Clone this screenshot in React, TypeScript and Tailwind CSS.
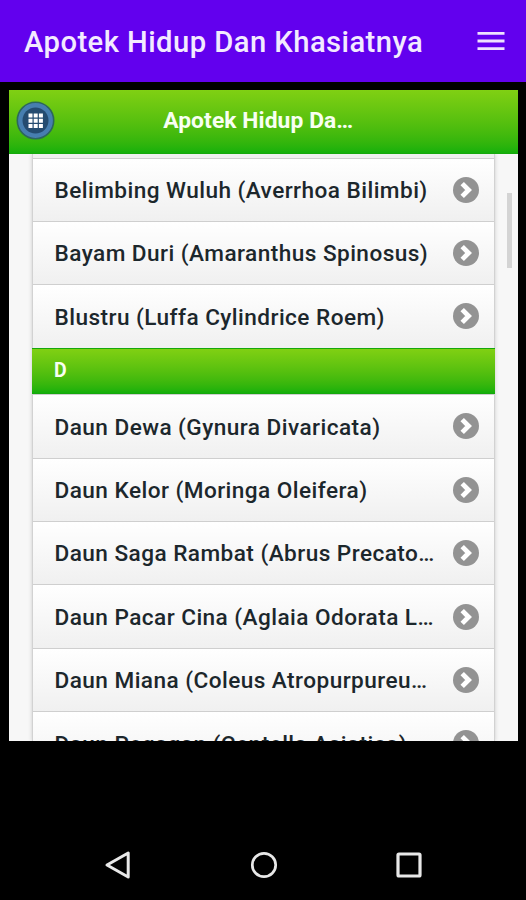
const beforeDivider = [
  "Belimbing Wuluh (Averrhoa Bilimbi)",
  "Bayam Duri (Amaranthus Spinosus)",
  "Blustru (Luffa Cylindrice Roem)"
];

const afterDivider = [
  "Daun Dewa (Gynura Divaricata)",
  "Daun Kelor (Moringa Oleifera)",
  "Daun Saga Rambat (Abrus Precato…",
  "Daun Pacar Cina (Aglaia Odorata L…",
  "Daun Miana (Coleus Atropurpureu…",
  "Daun Pegagan (Centella Asiatica)"
];

function ArrowIcon() {
  return (
    <svg className="shrink-0" width="26" height="26" viewBox="0 0 26 26" aria-hidden="true">
      <circle cx="13" cy="13" r="13" fill="#939393" />
      <path d="M9.2 6.6 15.6 13 9.2 19.4" fill="none" stroke="#fff" strokeWidth="4.8" />
    </svg>
  );
}

function PlantRow({ name }: { name: string }) {
  return (
    <li className="flex h-[63.4px] shrink-0 items-center justify-between border-t border-[#cfcfcf] bg-linear-to-b from-white to-[#f0f0f0] pr-[15px] pl-[21.5px]">
      <span className="pt-[3px] text-[22.6px] leading-none font-medium tracking-[0.45px] whitespace-nowrap text-[#1c272c]">{name}</span>
      <ArrowIcon />
    </li>
  );
}

export default function App() {
  return (
    <div className="flex h-[900px] w-[526px] flex-col overflow-hidden bg-black font-[Roboto,sans-serif]">
      <header className="flex h-[82px] shrink-0 items-center justify-between bg-[#6200ee] pr-[21px] pl-[24px]">
        <h1 className="pt-[4px] text-[29.2px] leading-none font-medium tracking-[0.45px] whitespace-nowrap text-[#f3eaff]">
          Apotek Hidup Dan Khasiatnya
        </h1>
        <svg width="28" height="20" viewBox="0 0 28 20" aria-hidden="true">
          <path d="M0.5 2.3h27M0.5 10h27M0.5 17.7h27" stroke="#eee2ff" strokeWidth="2.8" />
        </svg>
      </header>

      <main className="mt-[8px] ml-[9px] flex h-[650.5px] w-[508.5px] shrink-0 flex-col overflow-hidden bg-[#f7f7f7]">
        <div className="grid h-[64px] shrink-0 grid-cols-[53px_1fr_63px] items-center border-b border-[#16a80c] bg-linear-to-b from-[#80d013] to-[#13b00b]">
          <svg className="mb-[3px] ml-[7px]" width="39" height="39" viewBox="0 0 39 39" aria-hidden="true">
            <circle cx="19.5" cy="19.5" r="18.2" fill="#477eb0" stroke="#2d675c" strokeWidth="1.6" />
            <circle cx="19.5" cy="19.5" r="13" fill="#244b70" />
            <path
              d="M12.5 12.5h4v4h-4zM17.7 12.5h4v4h-4zM22.9 12.5h4v4h-4zM12.5 17.7h4v4h-4zM17.7 17.7h4v4h-4zM22.9 17.7h4v4h-4zM12.5 22.9h4v4h-4zM17.7 22.9h4v4h-4zM22.9 22.9h4v4h-4z"
              fill="#fff"
            />
          </svg>
          <h2 className="mb-[1px] text-center text-[22.8px] leading-none font-bold tracking-[0.1px] whitespace-nowrap text-[#f8fff2]">
            Apotek Hidup Da…
          </h2>
        </div>

        <div className="flex min-h-0 grow overflow-hidden">
          <div className="w-[23px] shrink-0" />
          <ul className="flex w-[463px] shrink-0 flex-col border-x border-[#d2d2d2] shadow-[0_0_4px_#cccccc]">
            <li className="h-[3.5px] shrink-0 bg-[#f0f0f0]" />
            {beforeDivider.map((name) => (
              <PlantRow key={name} name={name} />
            ))}
            <li className="-mx-px flex h-[46.5px] shrink-0 items-center border-y border-[#16a80c] bg-linear-to-b from-[#80d013] to-[#13b00b] pl-[22px] text-[19.5px] leading-none font-bold text-[#f8fff2]">
              D
            </li>
            {afterDivider.map((name) => (
              <PlantRow key={name} name={name} />
            ))}
          </ul>
          <div className="mt-[39px] ml-[12px] h-[75px] w-[5px] shrink-0 bg-[#d4d4d4]" />
        </div>
      </main>

      <nav className="mt-auto flex h-[70px] shrink-0 items-center justify-between pr-[103px] pl-[104px]">
        <svg width="28" height="30" viewBox="0 0 28 30" aria-hidden="true">
          <path d="M24.2 3v24L3 15z" fill="none" stroke="#e8e8e8" strokeWidth="3" strokeLinejoin="round" />
        </svg>
        <svg width="28" height="28" viewBox="0 0 28 28" aria-hidden="true">
          <circle cx="14" cy="14" r="11.7" fill="none" stroke="#e8e8e8" strokeWidth="2.7" />
        </svg>
        <svg width="28" height="28" viewBox="0 0 28 28" aria-hidden="true">
          <rect x="3" y="3" width="22" height="22" rx="1" fill="none" stroke="#e8e8e8" strokeWidth="3.2" />
        </svg>
      </nav>
    </div>
  );
}
